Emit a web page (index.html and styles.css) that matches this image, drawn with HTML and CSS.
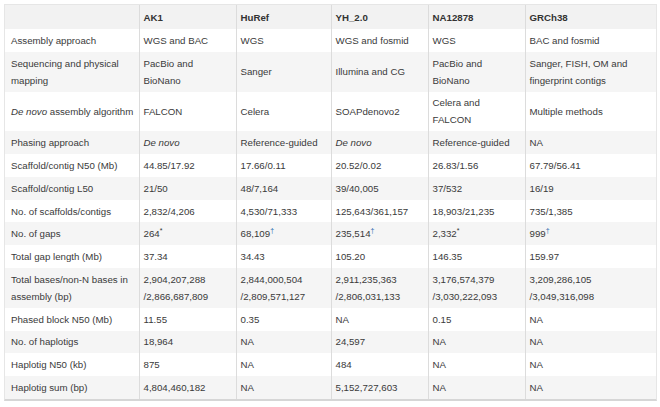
FILE: index.html
```html
<!DOCTYPE html>
<html>
<head>
<meta charset="utf-8">
<link rel="stylesheet" href="styles.css">
</head>
<body>
<div class="frame">
<table class="grid">
<colgroup>
<col class="c-label"><col class="c-ak1"><col class="c-huref"><col class="c-yh"><col class="c-na"><col class="c-grch">
</colgroup>
<thead>
<tr><th></th><th>AK1</th><th>HuRef</th><th>YH_2.0</th><th>NA12878</th><th>GRCh38</th></tr>
</thead>
<tbody>
<tr><td>Assembly approach</td><td>WGS and BAC</td><td>WGS</td><td>WGS and fosmid</td><td>WGS</td><td>BAC and fosmid</td></tr>
<tr><td>Sequencing and physical mapping</td><td>PacBio and BioNano</td><td>Sanger</td><td>Illumina and CG</td><td>PacBio and BioNano</td><td>Sanger, FISH, OM and fingerprint contigs</td></tr>
<tr><td class="nowrap"><i>De novo</i> assembly algorithm</td><td>FALCON</td><td>Celera</td><td>SOAPdenovo2</td><td>Celera and FALCON</td><td>Multiple methods</td></tr>
<tr><td>Phasing approach</td><td><i>De novo</i></td><td>Reference-guided</td><td><i>De novo</i></td><td>Reference-guided</td><td>NA</td></tr>
<tr><td>Scaffold/contig N50 (Mb)</td><td>44.85/17.92</td><td>17.66/0.11</td><td>20.52/0.02</td><td>26.83/1.56</td><td>67.79/56.41</td></tr>
<tr><td>Scaffold/contig L50</td><td>21/50</td><td>48/7,164</td><td>39/40,005</td><td>37/532</td><td>16/19</td></tr>
<tr><td>No. of scaffolds/contigs</td><td>2,832/4,206</td><td>4,530/71,333</td><td>125,643/361,157</td><td>18,903/21,235</td><td>735/1,385</td></tr>
<tr><td>No. of gaps</td><td>264<sup class="star">*</sup></td><td>68,109<sup class="dag">†</sup></td><td>235,514<sup class="dag">†</sup></td><td>2,332<sup class="star">*</sup></td><td>999<sup class="dag">†</sup></td></tr>
<tr><td>Total gap length (Mb)</td><td>37.34</td><td>34.43</td><td>105.20</td><td>146.35</td><td>159.97</td></tr>
<tr><td>Total bases/non-N bases in assembly (bp)</td><td>2,904,207,288 /2,866,687,809</td><td>2,844,000,504 /2,809,571,127</td><td>2,911,235,363 /2,806,031,133</td><td>3,176,574,379 /3,030,222,093</td><td>3,209,286,105 /3,049,316,098</td></tr>
<tr><td>Phased block N50 (Mb)</td><td>11.55</td><td>0.35</td><td>NA</td><td>0.15</td><td>NA</td></tr>
<tr><td>No. of haplotigs</td><td>18,964</td><td>NA</td><td>24,597</td><td>NA</td><td>NA</td></tr>
<tr><td>Haplotig N50 (kb)</td><td>875</td><td>NA</td><td>484</td><td>NA</td><td>NA</td></tr>
<tr><td>Haplotig sum (bp)</td><td>4,804,460,182</td><td>NA</td><td>5,152,727,603</td><td>NA</td><td>NA</td></tr>
</tbody>
</table>
</div>
</body>
</html>
```

FILE: styles.css
```css
html, body {
  margin: 0;
  padding: 0;
  background: #ffffff;
}

.frame {
  margin: 4px 0 0 4px;
  width: 651px;
  border: 1px solid #e6e6e6;
  border-bottom: 2px solid #d6d6d6;
}

.grid {
  width: 651px;
  table-layout: fixed;
  border-collapse: collapse;
  font-family: "Liberation Sans", Arial, sans-serif;
  font-size: 9.7px;
  line-height: 17px;
  color: #3a3a3a;
}

.c-label { width: 134px; }
.c-ak1 { width: 97px; }
.c-huref { width: 95px; }
.c-yh { width: 97px; }
.c-na { width: 97px; }
.c-grch { width: 131px; }

.grid th,
.grid td {
  text-align: left;
  vertical-align: middle;
  padding: 2.9px 4px;
  border-left: 1px solid #dcdcdc;
}

.grid th:first-child,
.grid td:first-child {
  border-left: none;
  padding-left: 6px;
  padding-right: 1px;
}

.grid td.nowrap {
  white-space: nowrap;
}

.grid th {
  font-weight: bold;
  color: #333333;
  background: #f2f2f2;
  padding-top: 3.5px;
  padding-bottom: 3.5px;
}

.grid tbody tr:nth-child(even) td {
  background: #f5f5f5;
}

.grid sup {
  font-size: 7px;
  line-height: 0;
  vertical-align: 4px;
}

.grid sup.dag {
  color: #2a6cb0;
}

.grid sup.star {
  color: #333333;
}
```
